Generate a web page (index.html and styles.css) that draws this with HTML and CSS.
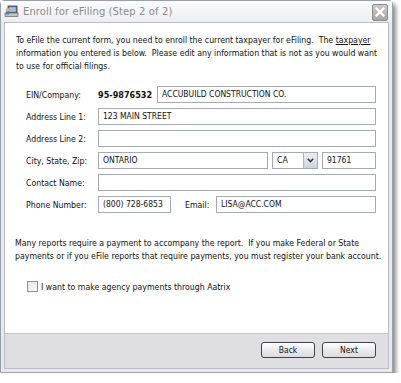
FILE: index.html
```html
<!DOCTYPE html>
<html>
<head>
<meta charset="utf-8">
<link rel="stylesheet" href="styles.css">
</head>
<body>
<div class="window">
  <div class="titlebar">
    <svg class="ticon" width="15" height="13" viewBox="0 0 15 13">
      <rect x="4" y="1" width="9" height="7" fill="#6d7a8a" stroke="#3b4350" stroke-width="0.8"/>
      <rect x="5.2" y="2.2" width="6.6" height="4.6" fill="#9fc0e4"/>
      <rect x="1" y="8" width="13" height="3.5" fill="#c9c4b4" stroke="#6b6656" stroke-width="0.7"/>
      <circle cx="3.5" cy="5" r="2" fill="#e3b07a"/>
      <rect x="2" y="6.5" width="3" height="3" fill="#3f7fc8"/>
    </svg>
    <span class="title">Enroll for eFiling (Step 2 of 2)</span>
    <span class="close">
      <svg width="10" height="10" viewBox="0 0 10 10"><path d="M1.5 1.5 L8.5 8.5 M8.5 1.5 L1.5 8.5" stroke="#fff" stroke-width="2.2" stroke-linecap="square"/></svg>
    </span>
  </div>
  <div class="client">
    <div class="main">
      <p class="intro">To eFile the current form, you need to enroll the current taxpayer for eFiling.&nbsp; The <u>taxpayer</u> information you entered is below.&nbsp; Please edit any information that is not as you would want to use for official filings.</p>
      <div class="form">
        <div class="row">
          <span class="label">EIN/Company:</span>
          <span class="ein">95-9876532</span>
          <span class="input grow">ACCUBUILD CONSTRUCTION CO.</span>
        </div>
        <div class="row">
          <span class="label">Address Line 1:</span>
          <span class="input grow">123 MAIN STREET</span>
        </div>
        <div class="row">
          <span class="label">Address Line 2:</span>
          <span class="input grow"></span>
        </div>
        <div class="row">
          <span class="label">City, State, Zip:</span>
          <span class="input grow">ONTARIO</span>
          <span class="select"><span class="sval">CA</span><span class="sbtn"><svg width="7" height="5" viewBox="0 0 7 5"><path d="M0.8 0.8 L3.5 3.6 L6.2 0.8" fill="none" stroke="#2b3a55" stroke-width="1.5"/></svg></span></span>
          <span class="input zip">91761</span>
        </div>
        <div class="row">
          <span class="label">Contact Name:</span>
          <span class="input grow"></span>
        </div>
        <div class="row">
          <span class="label">Phone Number:</span>
          <span class="input phone">(800) 728-6853</span>
          <span class="elabel">Email:</span>
          <span class="input grow">LISA@ACC.COM</span>
        </div>
      </div>
      <p class="note">Many reports require a payment to accompany the report.&nbsp; If you make Federal or State payments or if you eFile reports that require payments, you must register your bank account.</p>
      <div class="check"><span class="box"></span><span>I want to make agency payments through Aatrix</span></div>
    </div>
    <div class="footer">
      <span class="btn">Back</span>
      <span class="btn">Next</span>
    </div>
  </div>
</div>
</body>
</html>
```
FILE: styles.css
```css
html, body { margin: 0; padding: 0; background: #fff; }
body { font-family: "DejaVu Sans Condensed", "DejaVu Sans", sans-serif; font-size: 8.7px; color: #111; }
.window {
  border: 1px solid #9aa0a8;
  border-radius: 4px 4px 0 0;
  background: #e7e9ee;
  box-shadow: 3px 4px 4px rgba(0,0,0,0.45);
  display: flex; flex-direction: column;
  padding: 0 3px 3px 3px;
  box-sizing: border-box;
  width: 393px; height: 373px;
}
.titlebar {
  height: 21px; flex: none;
  display: flex; align-items: center;
  background: linear-gradient(#fbfbfc, #eceef2);
  margin: 0 -3px; padding: 0 3px;
}
.ticon { margin-left: 0; margin-right: 4px; }
.title { font-family: "DejaVu Sans", sans-serif; font-size: 10px; color: #8b8b8b; flex: 1; letter-spacing: 0.1px; }
.close {
  width: 16px; height: 17px; box-sizing: border-box;
  border: 1px solid #8e8a86; border-radius: 2px;
  background: linear-gradient(#cdcac6, #aaa6a1);
  display: flex; align-items: center; justify-content: center;
  margin-right: 1px; margin-top: 1px;
}
.client {
  flex: 1; display: flex; flex-direction: column;
  background: #fff; border: 1px solid #b9bdc5;
}
.main { flex: 1; padding: 11px 0 0 11px; }
.intro { margin: 0; line-height: 13px; width: 370px; }
u { text-decoration: underline; }
.form { margin-top: 13px; padding-left: 10px; padding-right: 12px; display: flex; flex-direction: column; gap: 5px; }
.row { display: flex; align-items: center; height: 17px; }
.label { width: 72px; flex: none; }
.ein { font-weight: bold; font-size: 9px; width: 59px; flex: none; }
.input {
  height: 17px; box-sizing: border-box;
  border: 1px solid #a6abb3; background: #fff;
  padding-left: 4px; line-height: 15px; font-size: 8.5px;
  white-space: nowrap; overflow: hidden;
}
.grow { flex: 1; }
.select {
  width: 46px; height: 17px; box-sizing: border-box; flex: none;
  border: 1px solid #a6abb3; margin-left: 4px;
  display: flex; align-items: stretch;
}
.sval { flex: 1; padding-left: 4px; line-height: 15px; }
.sbtn {
  width: 13px; border-left: 1px solid #b0b4bc;
  background: linear-gradient(#eceef2, #cfd3da);
  display: flex; align-items: center; justify-content: center;
}
.zip { width: 54px; flex: none; margin-left: 4px; }
.phone { width: 73px; flex: none; }
.elabel { width: 45px; flex: none; padding-left: 14px; box-sizing: border-box; }
.note { margin: 24px 0 0 -1px; line-height: 12.5px; width: 375px; }
.check { margin-top: 19px; padding-left: 11px; display: flex; align-items: center; gap: 3px; }
.box { width: 11px; height: 11px; box-sizing: border-box; border: 1px solid #8b9099; background: linear-gradient(135deg, #e3e5e9, #fafafa); }
.footer {
  height: 34px; flex: none;
  background: #dfdfe3; border-top: 1px solid #c3c5cb;
  display: flex; justify-content: flex-end; align-items: center; gap: 7px;
  padding-right: 12px;
}
.btn {
  width: 54px; height: 16px; box-sizing: border-box;
  border: 1px solid #3d4150; border-radius: 3px;
  background: linear-gradient(#ffffff, #e9e9ec 55%, #dcdce0);
  display: flex; align-items: center; justify-content: center;
  font-size: 8.5px; color: #111;
  margin-top: -2px;
}
```
